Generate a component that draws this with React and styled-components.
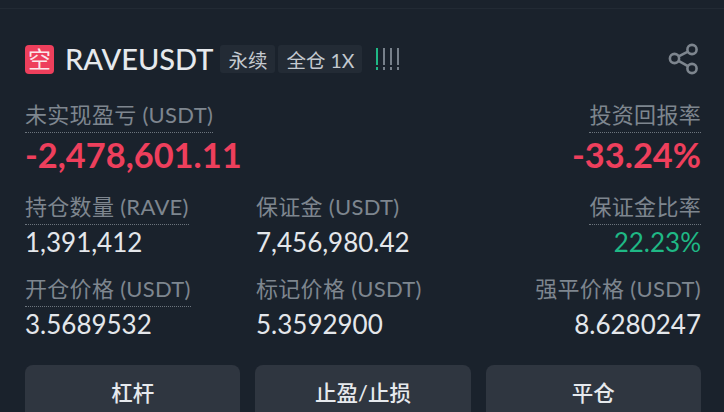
import React from "react";
import styled, { createGlobalStyle } from "styled-components";

const Global = createGlobalStyle`
  html, body {
    margin: 0;
    width: 724px;
    height: 412px;
    overflow: hidden;
    background: #1a222c;
  }
  * { box-sizing: border-box; }
`;

const Page = styled.div`
  width: 724px;
  height: 412px;
  overflow: hidden;
  padding: 8px 23px 0 25px;
  background: #1a222c;
  font-family: Lato, "Noto Sans CJK SC", sans-serif;
`;

const TopRule = styled.div`
  height: 1px;
  margin: 0 -23px 0 -25px;
  background: #222a34;
`;

const Header = styled.header`
  display: flex;
  align-items: center;
  height: 30px;
  margin-top: 35px;
`;

const SideBadge = styled.div`
  width: 29px;
  height: 29px;
  border-radius: 4px;
  background: #ee3f5c;
  color: #fbe6ea;
  display: flex;
  align-items: center;
  justify-content: center;
  font-size: 23px;
  line-height: 1;
`;

const Symbol = styled.h1`
  margin: 0 7px 0 11px;
  font-size: 29px;
  line-height: 30px;
  font-weight: 500;
  color: #e6e9ed;
`;

const Tag = styled.span`
  display: flex;
  align-items: center;
  height: 28px;
  padding: 0 8px;
  margin-right: 3px;
  border-radius: 3px;
  background: #232b35;
  color: #c4c9cf;
  font-size: 19.5px;
`;

const Bars = styled.span`
  display: flex;
  gap: 5px;
  margin-left: 11px;
`;

const Bar = styled.i`
  width: 2px;
  height: 22px;
  background: linear-gradient(
    to bottom,
    ${(p) => p.$color} 0 17px,
    transparent 17px 19px,
    ${(p) => p.$color} 19px
  );
`;

const ShareButton = styled.span`
  margin-left: auto;
  margin-right: 1px;
  display: flex;
  color: #7d858e;
`;

const Grid = styled.section`
  display: grid;
  grid-template-columns: 231px 1fr auto;
`;

const Cell = styled.div`
  display: flex;
  flex-direction: column;
  align-items: ${(p) => (p.$right ? "flex-end" : "flex-start")};
  height: 82px;
`;

const Label = styled.span`
  font-size: 22px;
  line-height: 23px;
  padding-bottom: 6px;
  letter-spacing: 0.3px;
  white-space: nowrap;
  color: #7e868f;
  border-bottom: ${(p) => (p.$plain ? "1px solid transparent" : "1px dotted #6c747d")};
`;

const Value = styled.span`
  font-size: 26px;
  line-height: 34px;
  color: ${(p) => p.$color || "#e4e7eb"};
`;

const Headline = styled.span`
  font-size: 34.4px;
  line-height: 38px;
  font-weight: 700;
  margin-top: 3px;
  color: #ee3f5c;
`;

const Summary = styled.section`
  display: flex;
  justify-content: space-between;
  height: 92px;
  margin-top: 29px;
`;

const Stack = styled.div`
  display: flex;
  flex-direction: column;
  align-items: ${(p) => (p.$right ? "flex-end" : "flex-start")};
`;

const Actions = styled.div`
  display: grid;
  grid-template-columns: repeat(3, 1fr);
  gap: 15px;
  margin-top: 6px;
`;

const Action = styled.button`
  height: 52px;
  padding: 0;
  border: none;
  border-radius: 8px 8px 0 0;
  background: #2f3640;
  color: #e6e9ed;
  font: 500 21.5px Lato, "Noto Sans CJK SC", sans-serif;
`;

const stats = [
  { label: "持仓数量 (RAVE)", value: "1,391,412" },
  { label: "保证金 (USDT)", value: "7,456,980.42", plain: true },
  { label: "保证金比率", value: "22.23%", right: true, color: "#1fb885" },
  { label: "开仓价格 (USDT)", value: "3.5689532" },
  { label: "标记价格 (USDT)", value: "5.3592900", plain: true },
  { label: "强平价格 (USDT)", value: "8.6280247", right: true, plain: true },
];

const ShareIcon = () => (
  <svg width="32" height="32" viewBox="0 0 32 32" fill="none" stroke="currentColor" strokeWidth="2.6">
    <circle cx="24" cy="6.5" r="4.6" />
    <circle cx="6.5" cy="15.5" r="4.6" />
    <circle cx="24" cy="25.5" r="4.6" />
    <path d="M10.6 13.4 19.9 8.6M10.6 17.8l9.3 5.4" />
  </svg>
);

export default function App() {
  return (
    <Page>
      <Global />
      <TopRule />
      <Header>
        <SideBadge>空</SideBadge>
        <Symbol>RAVEUSDT</Symbol>
        <Tag>永续</Tag>
        <Tag>全仓 1X</Tag>
        <Bars>
          <Bar $color="#1fb885" />
          <Bar $color="#77808a" />
          <Bar $color="#77808a" />
          <Bar $color="#77808a" />
        </Bars>
        <ShareButton>
          <ShareIcon />
        </ShareButton>
      </Header>
      <Summary>
        <Stack>
          <Label>未实现盈亏 (USDT)</Label>
          <Headline>-2,478,601.11</Headline>
        </Stack>
        <Stack $right>
          <Label>投资回报率</Label>
          <Headline>-33.24%</Headline>
        </Stack>
      </Summary>
      <Grid>
        {stats.map((s) => (
          <Cell key={s.label} $right={s.right}>
            <Label $plain={s.plain}>{s.label}</Label>
            <Value $color={s.color}>{s.value}</Value>
          </Cell>
        ))}
      </Grid>
      <Actions>
        <Action>杠杆</Action>
        <Action>止盈/止损</Action>
        <Action>平仓</Action>
      </Actions>
    </Page>
  );
}
